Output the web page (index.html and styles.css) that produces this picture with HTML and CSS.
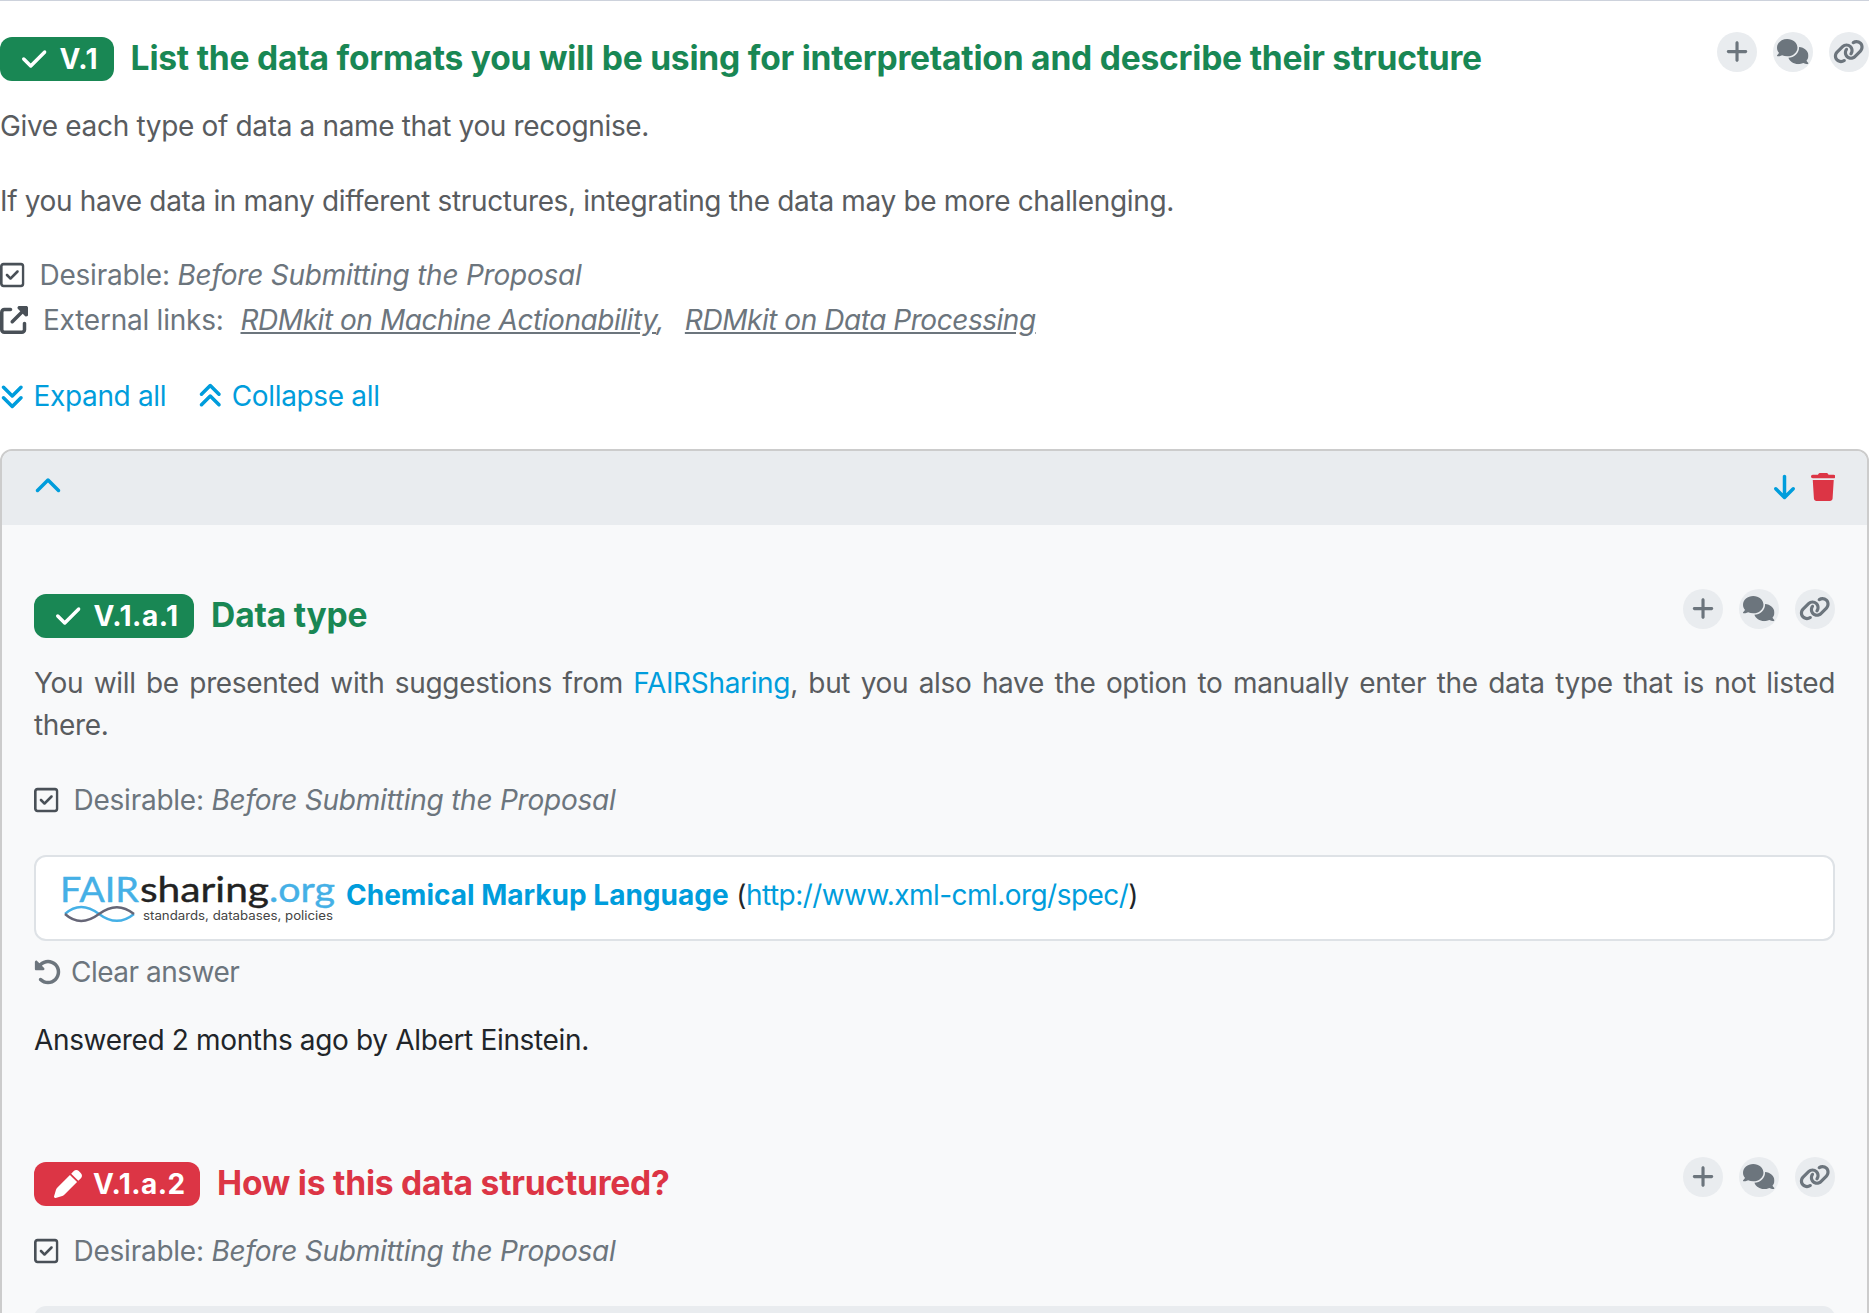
FILE: index.html
```
<!DOCTYPE html>
<html lang="en">
<head>
    <meta charset="utf-8">
    <title>Questionnaire</title>
    <link rel="stylesheet" href="styles.css">
</head>
<body>
    <!-- Icon definitions shared by all questions -->
    <svg class="icon-defs">
        <symbol id="i-check" viewBox="0 0 448 512"><path d="M438.6 105.4c12.5 12.5 12.5 32.8 0 45.3l-256 256c-12.5 12.5-32.8 12.5-45.3 0l-128-128c-12.5-12.5-12.5-32.8 0-45.3s32.8-12.5 45.3 0L160 338.7 393.4 105.4c12.5-12.5 32.8-12.5 45.3 0z"/></symbol>
        <symbol id="i-pen" viewBox="0 0 512 512"><path d="M362.7 19.3L314.3 67.7 444.3 197.7l48.4-48.4c25-25 25-65.5 0-90.5L453.3 19.3c-25-25-65.5-25-90.5 0zm-71 71L58.6 323.5c-10.4 10.4-18 23.3-22.2 37.4L1 481.2C-1.5 489.7 .8 498.8 7 505s15.3 8.5 23.7 6.1l120.3-35.4c14.1-4.2 27-11.8 37.4-22.2L421.7 220.3 291.7 90.3z"/></symbol>
        <symbol id="i-plus" viewBox="0 0 448 512"><path d="M256 80c0-17.7-14.3-32-32-32s-32 14.3-32 32V224H48c-17.7 0-32 14.3-32 32s14.3 32 32 32H192V432c0 17.7 14.3 32 32 32s32-14.3 32-32V288H400c17.7 0 32-14.3 32-32s-14.3-32-32-32H256V80z"/></symbol>
        <symbol id="i-comments" viewBox="0 0 640 512"><path d="M208 352c114.9 0 208-78.8 208-176S322.9 0 208 0S0 78.8 0 176c0 38.6 14.7 74.3 39.6 103.4c-3.5 9.4-8.7 17.7-14.2 24.7c-4.8 6.2-9.7 11-13.3 14.3c-1.8 1.6-3.3 2.9-4.3 3.7c-.5 .4-.9 .7-1.1 .8l-.2 .2C1 327.2-1.4 334.4 .8 340.9S9.1 352 16 352c21.8 0 43.8-5.6 62.1-12.5c9.2-3.5 17.8-7.4 25.3-11.4C134.1 343.3 169.8 352 208 352zM448 176c0 112.3-99.1 196.9-216.5 207C255.8 457.4 336.4 512 432 512c38.2 0 73.9-8.7 104.7-23.9c7.5 4 16 7.9 25.2 11.4c18.3 6.9 40.3 12.5 62.1 12.5c6.9 0 13.1-4.5 15.2-11.1c2.1-6.6-.2-13.8-5.8-17.9l-.2-.2c-.2-.2-.6-.4-1.1-.8c-1-.8-2.5-2-4.3-3.7c-3.6-3.3-8.5-8.1-13.3-14.3c-5.5-7-10.7-15.4-14.2-24.7c24.9-29 39.6-64.7 39.6-103.4c0-92.8-84.9-168.9-192.6-175.5c.4 5.1 .6 10.3 .6 15.5z"/></symbol>
        <symbol id="i-link" viewBox="0 0 640 512"><path d="M579.8 267.7c56.5-56.5 56.5-148 0-204.5c-50-50-128.8-56.5-186.3-15.4l-1.6 1.1c-14.4 10.3-17.7 30.3-7.4 44.6s30.3 17.7 44.6 7.4l1.6-1.1c32.1-22.9 76-19.3 103.8 8.6c31.5 31.5 31.5 82.5 0 114L422.3 334.8c-31.5 31.5-82.5 31.5-114 0c-27.9-27.9-31.5-71.8-8.6-103.8l1.1-1.6c10.3-14.4 6.9-34.4-7.4-44.6s-34.4-6.9-44.6 7.4l-1.1 1.6C206.5 251.2 213 330 263 380c56.5 56.5 148 56.5 204.5 0L579.8 267.7zM60.2 244.3c-56.5 56.5-56.5 148 0 204.5c50 50 128.8 56.5 186.3 15.4l1.6-1.1c14.4-10.3 17.7-30.3 7.4-44.6s-30.3-17.7-44.6-7.4l-1.6 1.1c-32.1 22.9-76 19.3-103.8-8.6C74 372 74 321 105.5 289.5L217.7 177.2c31.5-31.5 82.5-31.5 114 0c27.9 27.9 31.5 71.8 8.6 103.9l-1.1 1.6c-10.3 14.4-6.9 34.4 7.4 44.6s34.4 6.9 44.6-7.4l1.1-1.6C433.5 260.8 427 182 377 132c-56.5-56.5-148-56.5-204.5 0L60.2 244.3z"/></symbol>
        <symbol id="i-square-check" viewBox="0 0 448 512"><path d="M64 80c-8.8 0-16 7.2-16 16V416c0 8.8 7.2 16 16 16H384c8.8 0 16-7.2 16-16V96c0-8.8-7.2-16-16-16H64zM0 96C0 60.7 28.7 32 64 32H384c35.3 0 64 28.7 64 64V416c0 35.3-28.7 64-64 64H64c-35.3 0-64-28.7-64-64V96zM337 209L209 337c-9.4 9.4-24.6 9.4-33.9 0l-64-64c-9.4-9.4-9.4-24.6 0-33.9s24.6-9.4 33.9 0l47 47L303 175c9.4-9.4 24.6-9.4 33.9 0s9.4 24.6 0 33.9z"/></symbol>
        <symbol id="i-external" viewBox="0 0 512 512"><path d="M352 0c-12.9 0-24.6 7.8-29.6 19.8s-2.2 25.7 6.9 34.9L370.7 96 201.4 265.4c-12.5 12.5-12.5 32.8 0 45.3s32.8 12.5 45.3 0L416 141.3l41.4 41.4c9.2 9.2 22.9 11.9 34.9 6.9s19.8-16.6 19.8-29.6V32c0-17.7-14.3-32-32-32H352zM80 32C35.8 32 0 67.8 0 112V432c0 44.2 35.8 80 80 80H400c44.2 0 80-35.8 80-80V320c0-17.7-14.3-32-32-32s-32 14.3-32 32V432c0 8.8-7.2 16-16 16H80c-8.8 0-16-7.2-16-16V112c0-8.8 7.2-16 16-16H192c17.7 0 32-14.3 32-32s-14.3-32-32-32H80z"/></symbol>
        <symbol id="i-angles-down" viewBox="0 0 448 512"><path d="M246.6 470.6c-12.5 12.5-32.8 12.5-45.3 0l-160-160c-12.5-12.5-12.5-32.8 0-45.3s32.8-12.5 45.3 0L224 402.7 361.4 265.4c12.5-12.5 32.8-12.5 45.3 0s12.5 32.8 0 45.3l-160 160zm160-352l-160 160c-12.5 12.5-32.8 12.5-45.3 0l-160-160c-12.5-12.5-12.5-32.8 0-45.3s32.8-12.5 45.3 0L224 210.7 361.4 73.4c12.5-12.5 32.8-12.5 45.3 0s12.5 32.8 0 45.3z"/></symbol>
        <symbol id="i-angles-up" viewBox="0 0 448 512"><path d="M246.6 41.4c-12.5-12.5-32.8-12.5-45.3 0l-160 160c-12.5 12.5-12.5 32.8 0 45.3s32.8 12.5 45.3 0L224 109.3 361.4 246.6c12.5 12.5 32.8 12.5 45.3 0s12.5-32.8 0-45.3l-160-160zm160 352l-160-160c-12.5-12.5-32.8-12.5-45.3 0l-160 160c-12.5 12.5-12.5 32.8 0 45.3s32.8 12.5 45.3 0L224 301.3 361.4 438.6c12.5 12.5 32.8 12.5 45.3 0s12.5-32.8 0-45.3z"/></symbol>
        <symbol id="i-chevron-up" viewBox="0 0 512 512"><path d="M233.4 105.4c12.5-12.5 32.8-12.5 45.3 0l192 192c12.5 12.5 12.5 32.8 0 45.3s-32.8 12.5-45.3 0L256 173.3 86.6 342.6c-12.5 12.5-32.8 12.5-45.3 0s-12.5-32.8 0-45.3l192-192z"/></symbol>
        <symbol id="i-arrow-down" viewBox="0 0 384 512"><path d="M169.4 470.6c12.5 12.5 32.8 12.5 45.3 0l160-160c12.5-12.5 12.5-32.8 0-45.3s-32.8-12.5-45.3 0L224 370.8 224 64c0-17.7-14.3-32-32-32s-32 14.3-32 32l0 306.7L54.6 265.4c-12.5-12.5-32.8-12.5-45.3 0s-12.5 32.8 0 45.3l160 160z"/></symbol>
        <symbol id="i-trash" viewBox="0 0 448 512"><path d="M135.2 17.7L128 32H32C14.3 32 0 46.3 0 64S14.3 96 32 96H416c17.7 0 32-14.3 32-32s-14.3-32-32-32H320l-7.2-14.3C307.4 6.8 296.3 0 284.2 0H163.8c-12.1 0-23.2 6.8-28.6 17.7zM416 128H32L53.2 467c1.6 25.3 22.6 45 47.9 45H346.9c25.3 0 46.3-19.7 47.9-45L416 128z"/></symbol>
        <symbol id="i-undo" viewBox="0 0 512 512"><path d="M48.5 224H40c-13.3 0-24-10.7-24-24V72c0-9.7 5.8-18.5 14.8-22.2s19.3-1.7 26.2 5.2L98.6 96.6c87.6-86.5 228.7-86.2 315.8 1c87.5 87.5 87.5 229.3 0 316.8s-229.3 87.5-316.8 0c-12.5-12.5-12.5-32.8 0-45.3s32.8-12.5 45.3 0c62.5 62.5 163.8 62.5 226.3 0s62.5-163.8 0-226.3c-62.2-62.2-162.7-62.5-225.3-1L185 183c6.9 6.9 8.9 17.2 5.2 26.2s-12.5 14.8-22.2 14.8H48.5z"/></symbol>
    </svg>

    <div class="question">
        <div class="question-header text-success">
            <span class="badge badge-success"><svg class="icon"><use href="#i-check"/></svg>V.1</span>
            <h2>List the data formats you will be using for interpretation and describe their structure</h2>
            <div class="actions">
                <a><svg class="icon"><use href="#i-plus"/></svg></a>
                <a><svg class="icon icon-wide"><use href="#i-comments"/></svg></a>
                <a><svg class="icon icon-wide"><use href="#i-link"/></svg></a>
            </div>
        </div>
        <p class="description">Give each type of data a name that you recognise.</p>
        <p class="description">If you have data in many different structures, integrating the data may be more challenging.</p>
        <div class="extra">
            <div class="extra-row"><svg class="icon"><use href="#i-square-check"/></svg><span>Desirable: <i>Before Submitting the Proposal</i></span></div>
            <div class="extra-row"><svg class="icon icon-square"><use href="#i-external"/></svg><span>External links:</span><span class="links"><i><a>RDMkit on Machine Actionability</a>,</i><i><a>RDMkit on Data Processing</a></i></span></div>
        </div>
        <div class="toggles">
            <a><svg class="icon"><use href="#i-angles-down"/></svg>Expand all</a>
            <a><svg class="icon"><use href="#i-angles-up"/></svg>Collapse all</a>
        </div>
    </div>

    <div class="item">
        <div class="item-header">
            <svg class="icon icon-square"><use href="#i-chevron-up"/></svg>
            <div class="item-buttons">
                <svg class="icon icon-arrow"><use href="#i-arrow-down"/></svg>
                <svg class="icon icon-trash"><use href="#i-trash"/></svg>
            </div>
        </div>
        <div class="item-body">
            <div class="question">
                <div class="question-header text-success">
                    <span class="badge badge-success"><svg class="icon"><use href="#i-check"/></svg>V.1.a.1</span>
                    <h2>Data type</h2>
                    <div class="actions">
                        <a><svg class="icon"><use href="#i-plus"/></svg></a>
                        <a><svg class="icon icon-wide"><use href="#i-comments"/></svg></a>
                        <a><svg class="icon icon-wide"><use href="#i-link"/></svg></a>
                    </div>
                </div>
                <p class="description">You will be presented with suggestions from <a>FAIRSharing</a>, but you also have the option to manually enter the data type that is not listed there.</p>
                <div class="extra">
                    <div class="extra-row"><svg class="icon"><use href="#i-square-check"/></svg><span>Desirable: <i>Before Submitting the Proposal</i></span></div>
                </div>
                <div class="answer">
                    <svg class="logo" viewBox="0 0 274 50">
                        <text class="logo-blue" x="-2" y="28" textLength="79" lengthAdjust="spacingAndGlyphs">FAIR</text>
                        <text class="logo-dark" x="78" y="28" textLength="129" lengthAdjust="spacingAndGlyphs">sharing</text>
                        <text class="logo-blue" x="207" y="28" textLength="66" lengthAdjust="spacingAndGlyphs">.org</text>
                        <text class="logo-tagline" x="81" y="46" textLength="190" lengthAdjust="spacingAndGlyphs">standards, databases, policies</text>
                        <path class="wave wave-blue" d="M3 40C13 31 25 31 37 40S61 49 72 40"/>
                        <path class="wave wave-dark" d="M3 40C13 49 25 49 37 40S61 31 72 40"/>
                    </svg>
                    <span><a class="answer-name">Chemical Markup Language</a> (<a class="answer-url">http://www.xml-cml.org/spec/</a>)</span>
                </div>
                <a class="clear-answer"><svg class="icon icon-square"><use href="#i-undo"/></svg>Clear answer</a>
                <p class="answered">Answered 2 months ago by Albert Einstein.</p>
            </div>

            <div class="question">
                <div class="question-header text-danger">
                    <span class="badge badge-danger"><svg class="icon icon-square"><use href="#i-pen"/></svg>V.1.a.2</span>
                    <h2>How is this data structured?</h2>
                    <div class="actions">
                        <a><svg class="icon"><use href="#i-plus"/></svg></a>
                        <a><svg class="icon icon-wide"><use href="#i-comments"/></svg></a>
                        <a><svg class="icon icon-wide"><use href="#i-link"/></svg></a>
                    </div>
                </div>
                <div class="extra">
                    <div class="extra-row"><svg class="icon"><use href="#i-square-check"/></svg><span>Desirable: <i>Before Submitting the Proposal</i></span></div>
                </div>
                <div class="options"></div>
            </div>
        </div>
    </div>
</body>
</html>
```
FILE: styles.css
```
* {
    box-sizing: border-box;
}

body {
    margin: 0;
    height: 1313px;
    overflow: hidden;
    border-top: 1px solid #cdd2dc;
    padding-top: 31px;
    font-family: Inter, sans-serif;
    font-size: 28px;
    line-height: 42px;
    letter-spacing: -.34px;
    color: #212529;
    background-color: #fff;
}

a {
    color: #009ddc;
    text-decoration: none;
}

p {
    margin: 0;
}

.icon-defs {
    display: none;
}

.icon {
    width: .875em;
    height: 1em;
    fill: currentColor;
    flex: none;
}

.icon-square {
    width: 1em;
}

.icon-wide {
    width: 1.25em;
}

/* Question heading */
.question-header {
    display: flex;
    align-items: flex-start;
    height: 49px;
    margin-bottom: 24px;
}

.question-header h2 {
    margin: 5px 0 0 17px;
    font-size: 33.6px;
    line-height: 41px;
    font-weight: 700;
    letter-spacing: -.22px;
    white-space: nowrap;
}

.badge {
    display: flex;
    align-items: center;
    height: 44px;
    margin-top: 5px;
    padding: 0 15.5px 0 22px;
    border-radius: 12px;
    color: #fff;
    font-weight: 700;
    letter-spacing: .5px;
    gap: 13px;
}

.badge-success {
    background-color: #198754;
}

.badge-danger {
    padding-left: 20px;
    padding-right: 14.5px;
    gap: 11px;
    letter-spacing: .4px;
    background-color: #dc3545;
}

.text-success {
    color: #198754;
}

.text-danger {
    color: #dc3545;
}

.actions {
    display: flex;
    gap: 16px;
    margin-left: auto;
}

.actions a {
    display: flex;
    align-items: center;
    justify-content: center;
    width: 40px;
    height: 40px;
    border-radius: 50%;
    background-color: #e9ecef;
    color: #6c757d;
    font-size: 25.2px;
}

.description {
    margin-bottom: 32.5px;
    color: #595c5f;
    text-align: justify;
}

.extra {
    color: #6c757d;
    letter-spacing: -.24px;
}

.extra-row {
    display: flex;
    align-items: center;
    height: 42px;
    gap: 15px;
}

.extra-row + .extra-row {
    margin-top: 3px;
}

.extra-row .icon {
    color: #495057;
}

.links {
    display: flex;
    gap: 21px;
    margin-left: 2px;
    letter-spacing: -.46px;
}

.links a {
    color: #6c757d;
    text-decoration: underline;
}

.toggles {
    display: flex;
    gap: 32px;
    margin: 34px 0 32px;
}

.toggles a {
    display: flex;
    align-items: center;
    gap: 9px;
}

/* List item panel */
.item {
    height: 1000px;
    border: 2px solid #ccc;
    border-radius: 12px;
    background-color: #f8f9fa;
}

.item-header {
    display: flex;
    align-items: center;
    justify-content: space-between;
    height: 74px;
    padding: 0 32px 2px;
    border-radius: 10px 10px 0 0;
    background-color: #e9ecef;
    color: #009ddc;
}

.item-buttons {
    display: flex;
    gap: 16px;
}

.icon-arrow {
    width: .75em;
}

.icon-trash {
    color: #dc3545;
}

.item-body {
    padding: 64px 32px 0;
}

.answer {
    display: flex;
    align-items: center;
    height: 86px;
    margin-top: 34px;
    padding: 0 26px 6px;
    gap: 10px;
    border: 2px solid #dee2e6;
    border-radius: 12px;
    background-color: #fff;
}

.answer-name {
    font-weight: 700;
    letter-spacing: 0;
}

.answer-url {
    letter-spacing: -.55px;
}

.logo {
    width: 274px;
    height: 50px;
    margin-top: 9px;
    overflow: visible;
    font-family: Lato, sans-serif;
    font-size: 35px;
    letter-spacing: 0;
}

.logo-blue {
    fill: #45b0e6;
    stroke: #45b0e6;
    stroke-width: .4;
}

.logo-dark {
    fill: #222;
    stroke: #222;
    stroke-width: .4;
}

.logo-tagline {
    font-family: Inter, sans-serif;
    font-size: 12.5px;
    fill: #444;
}

.wave {
    fill: none;
    stroke-width: 2.4;
}

.wave-blue {
    stroke: #45b0e6;
}

.wave-dark {
    stroke: #667;
}

.clear-answer {
    display: flex;
    align-items: center;
    margin-top: 10px;
    gap: 9px;
    color: #6c757d;
    letter-spacing: -.5px;
}

.answered {
    margin: 26px 0 96px;
}

.options {
    height: 100px;
    margin-top: 34px;
    border-radius: 12px;
    background-color: #e9ecef;
}
```
